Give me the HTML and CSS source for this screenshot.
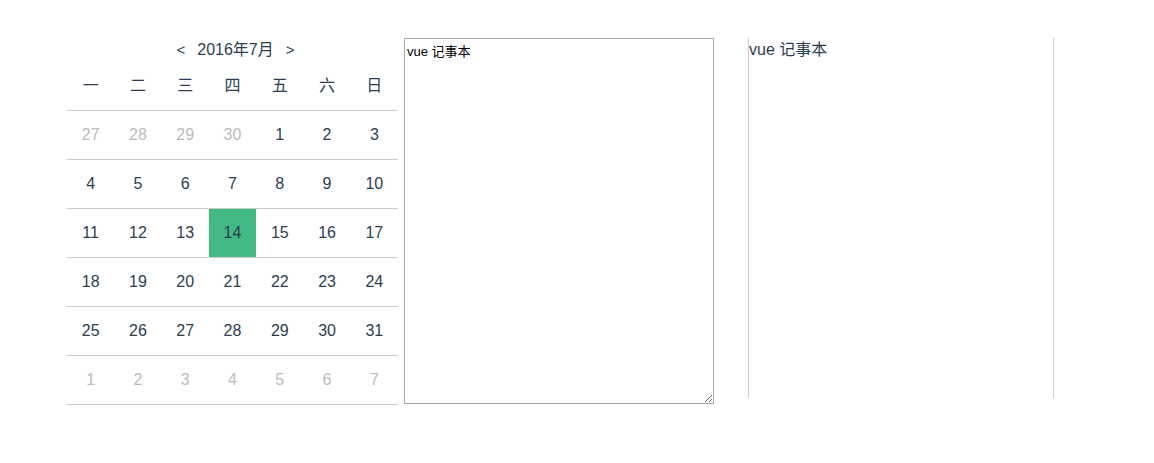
FILE: index.html
```html
<!DOCTYPE html>
<html lang="zh">
<head>
<meta charset="utf-8">
<title>vue 记事本</title>
<link rel="stylesheet" href="styles.css">
</head>
<body>
<div class="app">
  <div class="calendar">
    <div class="cal-title"><span class="arrow">&lt;</span>2016年7月<span class="arrow">&gt;</span></div>
    <div class="cal-grid weekdays">
      <div>一</div><div>二</div><div>三</div><div>四</div><div>五</div><div>六</div><div>日</div>
    </div>
    <div class="cal-grid">
      <div class="other">27</div><div class="other">28</div><div class="other">29</div><div class="other">30</div><div>1</div><div>2</div><div>3</div>
    </div>
    <div class="cal-grid">
      <div>4</div><div>5</div><div>6</div><div>7</div><div>8</div><div>9</div><div>10</div>
    </div>
    <div class="cal-grid">
      <div>11</div><div>12</div><div>13</div><div class="today">14</div><div>15</div><div>16</div><div>17</div>
    </div>
    <div class="cal-grid">
      <div>18</div><div>19</div><div>20</div><div>21</div><div>22</div><div>23</div><div>24</div>
    </div>
    <div class="cal-grid">
      <div>25</div><div>26</div><div>27</div><div>28</div><div>29</div><div>30</div><div>31</div>
    </div>
    <div class="cal-grid">
      <div class="other">1</div><div class="other">2</div><div class="other">3</div><div class="other">4</div><div class="other">5</div><div class="other">6</div><div class="other">7</div>
    </div>
  </div>
  <textarea class="editor">vue 记事本</textarea>
  <div class="preview">vue 记事本</div>
</div>
</body>
</html>
```
FILE: styles.css
```css
html, body {
  margin: 0;
  padding: 0;
  background: #fff;
}
body {
  font-family: "Liberation Sans", Arial, "Noto Sans CJK SC", sans-serif;
  color: #2c3e50;
  font-size: 16px;
}
.app {
  display: flex;
  align-items: flex-start;
  padding: 38px 0 0 67px;
}
.calendar {
  width: 331px;
}
.cal-title {
  height: 24px;
  line-height: 24px;
  text-align: center;
  font-size: 16px;
  padding-left: 6px;
  box-sizing: border-box;
}
.cal-title .arrow {
  padding: 0 12px;
  font-size: 15px;
}
.cal-grid {
  display: grid;
  grid-template-columns: repeat(7, 1fr);
  border-bottom: 1px solid #cccccc;
}
.cal-grid > div {
  height: 48px;
  line-height: 48px;
  text-align: center;
}
.cal-grid > .other {
  color: #bbbbbb;
}
.cal-grid > .today {
  background: #42b983;
}
.editor {
  margin: 0 0 0 6px;
  width: 310px;
  height: 366px;
  box-sizing: border-box;
  border: 1px solid #a9a9a9;
  padding: 2px;
  font-family: "Liberation Sans", Arial, "Noto Sans CJK SC", sans-serif;
  font-size: 13px;
  color: #000;
  resize: both;
  outline: none;
}
.preview {
  margin-left: 34px;
  width: 306px;
  height: 360px;
  box-sizing: border-box;
  border-left: 1px solid #cccccc;
  border-right: 1px solid #cccccc;
  font-size: 16px;
  line-height: 24px;
}
```
